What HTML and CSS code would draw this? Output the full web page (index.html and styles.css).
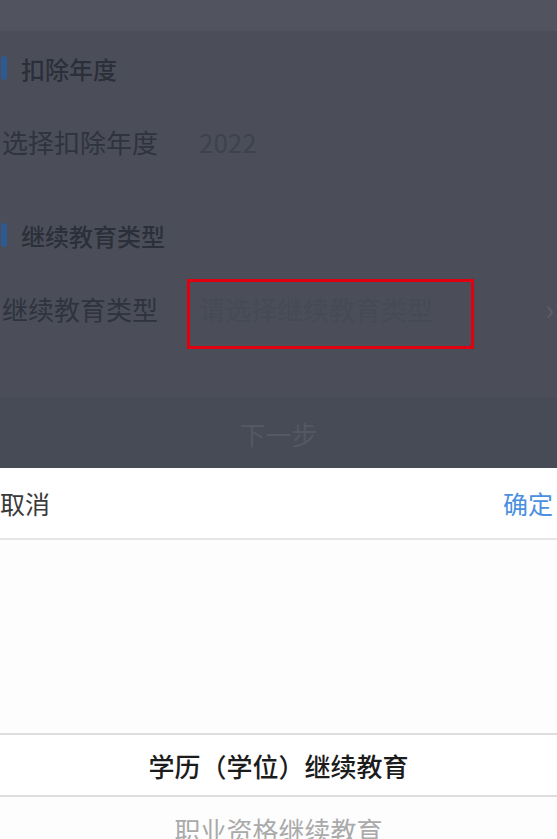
FILE: index.html
```html
<!DOCTYPE html>
<html lang="zh-CN">
<head>
<meta charset="utf-8">
<title>继续教育</title>
<link rel="stylesheet" href="styles.css">
</head>
<body>
<div class="screen">
  <div class="page">
    <div class="topbar"></div>
    <div class="section-title"><span class="bar"></span><span>扣除年度</span></div>
    <div class="row">
      <span class="label">选择扣除年度</span>
      <span class="value">2022</span>
    </div>
    <div class="section-title"><span class="bar"></span><span>继续教育类型</span></div>
    <div class="row row-select">
      <span class="label">继续教育类型</span>
      <span class="value placeholder">请选择继续教育类型</span>
      <span class="arrow">›</span>
      <span class="highlight"></span>
    </div>
    <div class="next-btn">下一步</div>
  </div>
  <div class="sheet">
    <div class="sheet-head">
      <span class="cancel">取消</span>
      <span class="confirm">确定</span>
    </div>
    <div class="picker">
      <div class="picker-space"></div>
      <div class="picker-item selected">学历（学位）继续教育</div>
      <div class="picker-item">职业资格继续教育</div>
    </div>
  </div>
</div>
</body>
</html>
```

FILE: styles.css
```css
html, body {
  margin: 0;
  padding: 0;
}
body {
  width: 557px;
  height: 839px;
  overflow: hidden;
  font-family: "Noto Sans CJK SC", "Noto Sans", sans-serif;
  background: #ffffff;
}
.screen {
  display: flex;
  flex-direction: column;
  height: 839px;
}
.page {
  height: 468px;
  background: #4b4e59;
  display: flex;
  flex-direction: column;
}
.topbar {
  height: 31px;
  background: #51545f;
  flex: none;
}
.section-title {
  height: 48px;
  display: flex;
  align-items: center;
  gap: 14px;
  font-size: 24px;
  font-weight: 500;
  color: #2b2f39;
  flex: none;
}
.page .section-title:nth-child(2) { margin-top: 13px; }
.page .section-title:nth-child(4) { margin-top: 37px; }
.bar {
  width: 6px;
  height: 24px;
  margin-left: 1px;
  border-radius: 3px;
  background: #2f5a91;
}
.row {
  height: 66px;
  display: flex;
  align-items: center;
  position: relative;
  font-size: 26px;
  color: #2f333d;
  flex: none;
}
.page .row:nth-child(3) { margin-top: 16px; }
.page .row:nth-child(5) { margin-top: 16px; }
.label {
  width: 199px;
  padding-left: 2px;
  box-sizing: border-box;
  flex: none;
}
.value {
  color: #3d424d;
}
.placeholder {
  color: #454a54;
}
.arrow {
  margin-left: auto;
  margin-right: 3px;
  color: #5b5f69;
  font-size: 28px;
}
.highlight {
  position: absolute;
  left: 187px;
  top: 4px;
  width: 287px;
  height: 70px;
  box-sizing: border-box;
  border: 3px solid #e0000f;
}
.next-btn {
  margin-top: 57px;
  height: 70px;
  background: #464b56;
  display: flex;
  align-items: center;
  justify-content: center;
  color: #525864;
  font-size: 26px;
  flex: none;
}
.sheet {
  flex: 1;
  background: #ffffff;
  display: flex;
  flex-direction: column;
  overflow: hidden;
}
.sheet-head {
  height: 70px;
  display: flex;
  align-items: center;
  justify-content: space-between;
  font-size: 25px;
  border-bottom: 2px solid #e6e6e6;
  flex: none;
}
.cancel {
  color: #3a3a3a;
}
.confirm {
  color: #4a8fe0;
  margin-right: 4px;
}
.picker {
  flex: 1;
  background: #fdfdfd;
}
.picker-space {
  height: 193px;
}
.picker-item {
  height: 64px;
  display: flex;
  align-items: center;
  justify-content: center;
  font-size: 26px;
  color: #aaaaaa;
}
.picker-item.selected {
  color: #1c1c1c;
  font-weight: 500;
  border-top: 2px solid #dedede;
  border-bottom: 2px solid #dedede;
  box-sizing: border-box;
  background: #ffffff;
}
```
